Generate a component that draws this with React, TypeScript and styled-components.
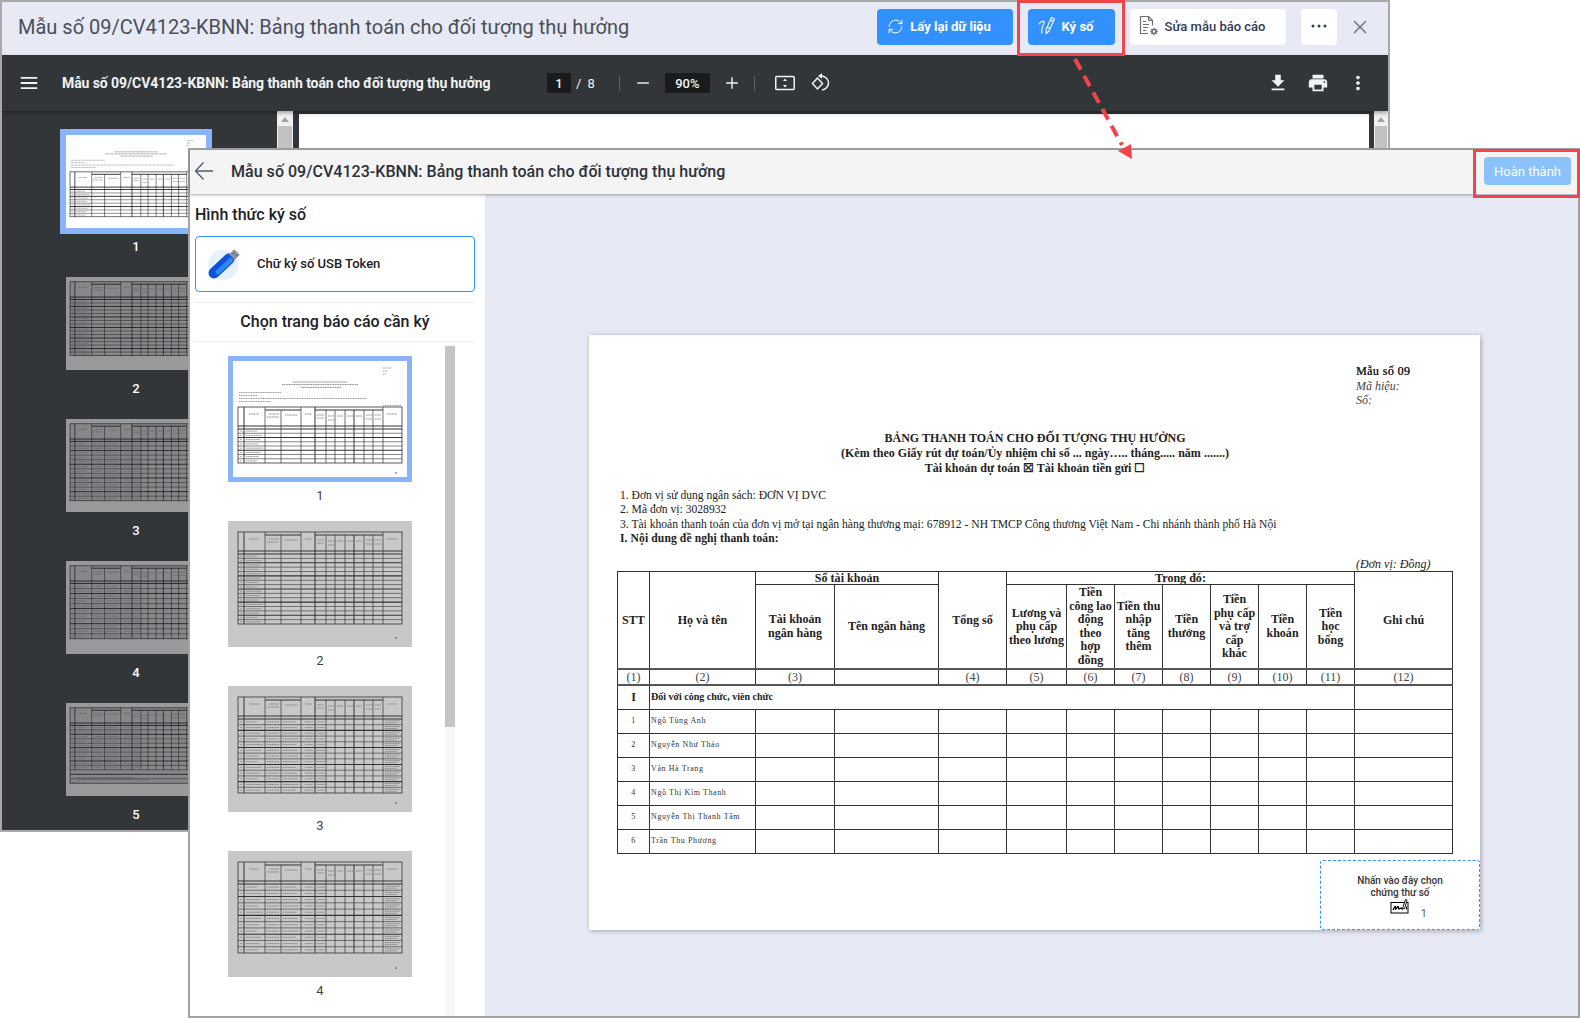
import React from 'react';
import styled, { createGlobalStyle } from 'styled-components';
import { RefreshCw, X } from 'lucide-react';

const GlobalStyle = createGlobalStyle`
  html, body { margin: 0; padding: 0; background: #fff; }
  body { font-family: Roboto, "Noto Sans", sans-serif; }
  * { box-sizing: border-box; }
`;

const Stage = styled.div`
  position: relative;
  width: 1580px;
  height: 1019px;
  overflow: hidden;
  background: #fff;
`;

/* back window */
const BackWindow = styled.section`
  position: absolute;
  left: 0;
  top: 0;
  width: 1390px;
  height: 832px;
  border: 2px solid #a9a9a9;
  display: flex;
  flex-direction: column;
  overflow: hidden;
  isolation: isolate;
`;

const BackHeader = styled.header`
  height: 53px;
  flex: none;
  display: flex;
  align-items: center;
  padding: 0 0 3px 16px;
  background: #e7e9f5;
`;

const BackTitle = styled.h1`
  flex: 1;
  margin: 0;
  font-size: 20px;
  font-weight: 400;
  color: #4a4f57;
  white-space: nowrap;
`;

const ActionButton = styled.button<{ $primary?: boolean; $w: number }>`
  width: ${p => p.$w}px;
  height: 36px;
  margin-right: 15px;
  border: 0;
  border-radius: 4px;
  padding: 0 ${p => (p.$w > 40 ? 12 : 0)}px 2px 0;
  display: flex;
  align-items: center;
  justify-content: center;
  gap: 6px;
  font-family: Roboto, sans-serif;
  font-size: 13px;
  font-weight: ${p => (p.$primary ? 700 : 500)};
  color: ${p => (p.$primary ? '#fff' : '#2f3a56')};
  background: ${p => (p.$primary ? '#3390ff' : '#fff')};
`;

const CloseIcon = styled.span`
  width: 22px;
  margin: 0 17px 0 -3px;
  display: flex;
  color: #6e7480;
`;

const PdfToolbar = styled.div`
  height: 56px;
  flex: none;
  display: flex;
  align-items: center;
  padding-left: 18px;
  background: #323639;
  color: #f1f3f4;
  box-shadow: 0 2px 4px rgba(0, 0, 0, 0.35);
  position: relative;
  z-index: 1;
`;

const ToolIcon = styled.span<{ $ml?: number }>`
  display: flex;
  margin-left: ${p => p.$ml ?? 0}px;
`;

const PdfTitle = styled.div`
  width: 485px;
  margin-left: 24px;
  font-size: 14px;
  font-weight: 700;
  letter-spacing: -0.08px;
  white-space: nowrap;
`;

const PageBox = styled.span<{ $w: number; $ml?: number }>`
  width: ${p => p.$w}px;
  height: 20px;
  margin-left: ${p => p.$ml ?? 0}px;
  display: flex;
  align-items: center;
  justify-content: center;
  background: #191b1c;
  font-size: 13px;
  font-weight: 500;
`;

const PageCount = styled.span`
  margin-left: 5px;
  font-size: 13px;
  word-spacing: 3px;
`;

const ToolSep = styled.span<{ $ml: number }>`
  width: 1px;
  height: 15px;
  margin-left: ${p => p.$ml}px;
  background: #5f6368;
`;

const PdfBody = styled.div`
  flex: 1;
  display: flex;
  min-height: 0;
  background: #323639;
`;

const ThumbRail = styled.div<{ $w: number; $pt: number; $pl: number }>`
  width: ${p => p.$w}px;
  flex: none;
  display: flex;
  flex-direction: column;
  padding: ${p => p.$pt}px 0 0 ${p => p.$pl}px;
  overflow: hidden;
`;

const ThumbItem = styled.div<{ $w: number; $h: number; $gap: number }>`
  width: ${p => p.$w}px;
  height: ${p => p.$h}px;
  flex: none;
  display: flex;
  flex-direction: column;
  align-items: center;
  gap: ${p => p.$gap}px;
`;

const ThumbSheet = styled.div<{ $w: number; $h: number; $paper: string; $ring?: number; $outer?: boolean }>`
  width: ${p => p.$w}px;
  height: ${p => p.$h}px;
  flex: none;
  background: ${p => p.$paper};
  ${p => (p.$ring && !p.$outer ? `border: ${p.$ring}px solid #8ab4f8;` : '')}
  ${p => (p.$ring && p.$outer ? `outline: ${p.$ring}px solid #8ab4f8;` : '')}
  svg { display: block; width: 100%; height: 100%; }
`;

const ThumbNumber = styled.span<{ $dark?: boolean }>`
  font-size: 13px;
  line-height: 15px;
  font-weight: ${p => (p.$dark ? 500 : 400)};
  color: ${p => (p.$dark ? '#fff' : '#444')};
`;

const Scrollbar = styled.div<{ $w: number }>`
  width: ${p => p.$w}px;
  flex: none;
  background: #f1f1f1;
  position: relative;
  padding-top: 15px;
  &::before {
    content: '';
    position: absolute;
    top: 6px;
    left: 50%;
    margin-left: -4px;
    border: 4px solid transparent;
    border-top: 0;
    border-bottom: 5px solid #a3a3a3;
  }
  &::after {
    content: '';
    display: block;
    height: 100%;
    margin: 0 1px;
    background: #c1c1c1;
  }
`;

const PdfPane = styled.div`
  flex: 1;
  margin: 3px 5px 0 6px;
  background: #fff;
`;

/* front window */
const FrontWindow = styled.section`
  position: absolute;
  left: 188px;
  top: 148px;
  width: 1392px;
  height: 870px;
  border: 2px solid #a3a3a3;
  display: flex;
  flex-direction: column;
  background: #e7e9f5;
  isolation: isolate;
`;

const FrontHeader = styled.header`
  height: 44px;
  flex: none;
  display: flex;
  align-items: center;
  padding: 0 7px 2px 4px;
  background: #f4f4f4;
  box-shadow: 0 1px 3px rgba(0, 0, 0, 0.35);
  position: relative;
  z-index: 1;
`;

const FrontTitle = styled.h2`
  flex: 1;
  margin: 0 0 0 17px;
  font-size: 16px;
  font-weight: 500;
  letter-spacing: 0.03px;
  color: #2c3038;
  white-space: nowrap;
`;

const DoneButton = styled.button`
  width: 87px;
  height: 28px;
  border: 0;
  border-radius: 4px;
  padding: 0;
  font-family: Roboto, sans-serif;
  font-size: 13px;
  color: #fff;
  background: #8ac3fb;
`;

const FrontBody = styled.div`
  flex: 1;
  display: flex;
  min-height: 0;
`;

const SignPanel = styled.aside`
  width: 295px;
  flex: none;
  display: flex;
  flex-direction: column;
  padding: 11px 0 0 5px;
  background: #fff;
  overflow: hidden;
`;

const PanelLabel = styled.div`
  font-size: 16px;
  line-height: 20px;
  font-weight: 500;
  color: #1d2026;
`;

const TokenCard = styled.div`
  width: 280px;
  height: 56px;
  flex: none;
  margin-top: 11px;
  display: flex;
  align-items: center;
  gap: 17px;
  padding: 0 0 1px 10px;
  border: 1px solid #2f95ff;
  border-radius: 4px;
  font-size: 13px;
  font-weight: 500;
  color: #1d2026;
`;

const PageHeading = styled.div`
  width: 280px;
  height: 40px;
  flex: none;
  margin-top: 10px;
  padding-bottom: 2px;
  display: flex;
  align-items: center;
  justify-content: center;
  border-top: 1px solid #eceef1;
  border-bottom: 1px solid #eceef1;
  font-size: 16px;
  font-weight: 500;
  color: #1d2026;
`;

const PageChooser = styled.div`
  flex: 1;
  display: flex;
  min-height: 0;
  margin-top: 4px;
`;

const ChooserScroll = styled.div`
  width: 10px;
  background: #f7f7f7;
  &::before {
    content: '';
    display: block;
    height: 381px;
    background: #c4c4c4;
  }
`;

const DocArea = styled.main`
  flex: 1;
  padding: 141px 99px 0 104px;
`;

const Sheet = styled.article`
  position: relative;
  height: 595px;
  padding: 29px 27px 0 28px;
  background: #fff;
  box-shadow: 1px 1px 5px rgba(0, 0, 0, 0.3);
  font-family: "Liberation Serif", "Times New Roman", serif;
  font-size: 12px;
  line-height: 14.5px;
  color: #222;
`;

const FormMeta = styled.div`
  margin-left: 739px;
  em { display: block; color: #444; }
  strong { font-weight: 400; letter-spacing: 0.4px; text-shadow: 0.3px 0 0 #222; }
`;

const FormTitle = styled.div`
  margin-top: 23px;
  text-align: center;
  font-weight: 700;
  letter-spacing: 0.02px;
  line-height: 15.2px;
`;

const FormLines = styled.div`
  margin: 12.5px 0 0 3px;
  font-size: 11.6px;
  b { letter-spacing: 0.1px; }
`;

const UnitNote = styled.div`
  margin: 11.5px 0 0 739px;
  font-style: italic;
  line-height: 12px;
  height: 13px;
`;

const DocTable = styled.table`
  width: 835px;
  table-layout: fixed;
  border-collapse: collapse;
  border: 1.5px solid #333;
  td, th {
    padding: 0;
    border: 1px solid #333;
    text-align: center;
    vertical-align: middle;
    overflow: hidden;
  }
  th { padding-top: 2px; font-weight: 700; letter-spacing: 0.03px; line-height: 13.6px; font-size: 12px; }
  th[colspan] { padding-top: 0; line-height: 12px; }
`;

const TitleRow = styled.tr`
  height: 13px;
`;

const LabelRow = styled.tr`
  height: 83px;
  th { padding-top: 1px; }
`;

const NumberRow = styled.tr`
  height: 16px;
  td { font-size: 12px; line-height: 12px; color: #444; border-top: 2px solid #555; border-bottom: 2px solid #555; }
`;

const GroupRow = styled.tr`
  height: 24.5px;
  td { font-weight: 700; font-size: 12px; }
  td + td { font-size: 10px; text-align: left; padding-left: 1px; }
`;

const PersonRow = styled.tr`
  height: 24px;
  td { font-size: 8px; letter-spacing: 0.6px; color: #333; }
  td:nth-child(2) { text-align: left; padding-left: 1px; }
`;

const SignSlot = styled.div`
  position: absolute;
  right: 0;
  bottom: 0;
  width: 160px;
  height: 70px;
  padding-top: 14px;
  border: 1px dashed #2f95ff;
  border-radius: 3px;
  display: flex;
  flex-direction: column;
  align-items: center;
  font-family: Roboto, sans-serif;
  font-size: 10px;
  line-height: 12px;
  font-weight: 500;
  color: #333;
`;

const SignMark = styled.div`
  position: relative;
  margin-top: -2px;
  display: flex;
  span {
    position: absolute;
    left: 31px;
    top: 11px;
    font-weight: 400;
    color: #555;
  }
`;

/* annotations */
const RedFrame = styled.div<{ $l: number; $t: number; $w: number; $h: number }>`
  position: absolute;
  left: ${p => p.$l}px;
  top: ${p => p.$t}px;
  width: ${p => p.$w}px;
  height: ${p => p.$h}px;
  border: 3px solid #f2444a;
  pointer-events: none;
`;

const ArrowSvg = styled.svg`
  position: absolute;
  left: 1060px;
  top: 50px;
`;

const COLS = [10, 16, 37, 53, 73, 87, 98, 107, 117, 126, 136, 145, 155, 174];

type SketchProps = {
  top: number;
  bottom: number;
  rows: number;
  ink: string;
  bar: string;
  tint?: string;
  filled?: boolean;
  first?: boolean;
  footer?: boolean;
  crop?: boolean;
};

function PageSketch({ top, bottom, rows, ink, bar, tint, filled, first, footer, crop }: SketchProps) {
  const head = top + 19;
  const num = head + 3;
  const rowH = (bottom - num) / rows;
  const ys = Array.from({ length: rows + 1 }, (_, i) => num + i * rowH);
  const footRows = footer ? 3 : 0;
  const gridEnd = bottom - footRows * rowH;
  return (
    <svg viewBox={crop ? '5 5 174 116' : '0 0 184 126'} preserveAspectRatio="none" aria-hidden="true">
      {first && (
        <g stroke={bar} strokeWidth=".7" strokeDasharray="1.2 .5">
          <path d="M155 12h8M155 15h5M155 18h3" />
          <path d="M65 26h54M54 28.600h76M73 31.400h40" strokeWidth=".9" />
          <path d="M11 36.500h42M11 39.500h18M11 42.500h128M11 45.500h32" />
          <path d="M155 49.500h18" />
        </g>
      )}
      <g stroke={ink} strokeWidth=".8" fill="none">
        <rect x="10" y={top} width="164" height={bottom - top} fill={tint ?? 'none'} />
        <path d={`M10 ${head}H174M10 ${num}H174`} strokeWidth="1.100" />
        {ys.slice(1, -1).map((y, i) => (
          <path key={i} d={`M10 ${y}H174`} strokeWidth={i % 3 === 1 ? 1.100 : 0.6} />
        ))}
        {COLS.slice(1, -1).map((x, i) => (
          <path
            key={x}
            d={`M${x} ${i === 2 || (i > 4 && i < 11) ? top + 3 : top}V${gridEnd}`}
            strokeWidth={i % 4 === 0 ? 1 : 0.7}
          />
        ))}
        <path d={`M37 ${top + 3}H73M87 ${top + 3}H155`} strokeWidth="1.100" />
      </g>
      <g stroke={bar} strokeWidth=".8" strokeDasharray="1.2 .4">
        <path d={`M21 ${top + 7}h10M41 ${top + 7}h10M57 ${top + 8}h13M77 ${top + 7}h7M89 ${top + 8}h7M100 ${top + 9}h6M109 ${top + 9}h6M119 ${top + 9}h6M128 ${top + 9}h6M138 ${top + 8}h6M147 ${top + 8}h6M159 ${top + 7}h10`} />
        <path d={`M39 ${top + 10}h12M89 ${top + 11}h7M100 ${top + 13}h6M138 ${top + 12}h6M147 ${top + 12}h6`} />
        {ys.slice(0, footer ? -4 : -1).map((y, i) => (
          <g key={i}>
            <path d={`M12 ${y + rowH / 2}h2M18 ${y + rowH / 2}h${11 + ((i * 5) % 7)}`} />
            {filled && (
              <path
                d={`M39 ${y + rowH / 2}h12M55 ${y + rowH / 2}h${13 + (i % 4)}M77 ${y + rowH / 2}h8M89 ${y + rowH / 2}h8M157 ${y + rowH / 2 - 1}h15M157 ${y + rowH / 2 + 1}h12`}
              />
            )}
          </g>
        ))}
        {footer && <path d={`M18 ${bottom - 7}h70M18 ${bottom - 4}h90M12 ${bottom - 1}h6`} />}
      </g>
      <path d="M167 117h2" stroke={ink} strokeWidth=".8" />
    </svg>
  );
}

const sketchPages = [
  { page: 1, top: 51, bottom: 107, rows: 8, first: true },
  { page: 2, top: 11, bottom: 103, rows: 16 },
  { page: 3, top: 11, bottom: 107, rows: 13, filled: true },
  { page: 4, top: 11, bottom: 102, rows: 11, filled: true },
  { page: 5, top: 11, bottom: 105, rows: 13, filled: true, footer: true },
];

const people = ['Ngô Tùng Anh', 'Nguyễn Như Thảo', 'Văn Hà Trang', 'Ngô Thị Kim Thanh', 'Nguyễn Thị Thanh Tâm', 'Trần Thu Phương'];
const colWidths = [32, 106, 79, 104, 68, 60, 48, 48, 48, 48, 48, 48, 98];

const MaterialIcon = ({ d, size = 22 }: { d: string; size?: number }) => (
  <svg width={size} height={size} viewBox="0 0 24 24" fill="currentColor"><path d={d} /></svg>
);

const SignPenIcon = () => (
  <svg width="18" height="20" viewBox="0 0 18 20" fill="none" stroke="#fff" strokeWidth="1.100" strokeLinecap="round" strokeLinejoin="round">
    <path d="M1 8c1.500-2 4-3.500 5-2.500 1 1-1.500 4-2 7-.3 1.500-.3 3-.2 4.500" />
    <path d="M13.500 1.500L16.500 3 11 15l-2.800 2.500-.2-3.700zM12.300 4l3 1.500M9 11l2.800 1.400" />
  </svg>
);

const DocGearIcon = () => (
  <svg width="20" height="22" viewBox="0 0 20 22" fill="none" stroke="#6b6f76" strokeWidth="1.200" strokeLinejoin="round">
    <path d="M9 18.500H1.500V1.500h8l4 4v5" />
    <path d="M9.500 1.500v4h4" />
    <path d="M4 6.500h3M4 9.500h6M4 12.500h5M4 15.500h3" />
    <circle cx="15" cy="16.500" r="2" strokeWidth="1.600" />
    <path d="M15 12.800v1.500M15 18.700v1.500M11.300 16.500h1.500M17.200 16.500h1.500M12.400 13.900l1 1M16.600 18.100l1 1M17.600 13.900l-1 1M13.400 18.100l-1 1" strokeWidth="1.300" />
  </svg>
);

const UsbIcon = () => (
  <svg width="34" height="32" viewBox="0 0 34 32" aria-hidden="true" fill="none">
    <circle cx="17" cy="17" r="15" fill="#e6f1fc" />
    <path d="M8 25L23 11" stroke="#0f52d6" strokeWidth="11" strokeLinecap="round" />
    <path d="M12 24L25 12" stroke="#2f88f0" strokeWidth="4.500" strokeLinecap="round" />
    <path d="M26 9L31 4" stroke="#8e959e" strokeWidth="8" />
    <path d="M27 5l1 1M30 7l1 1" stroke="#4e545c" strokeWidth="1.300" />
  </svg>
);

const SignGlyph = () => (
  <svg width="20" height="17" viewBox="0 0 20 17" fill="none" stroke="#000">
    <rect x="1" y="5.500" width="17" height="10.500" fill="#fff" strokeWidth="1" />
    <path d="M3 13c1-2 2-4 2.500-3.500S5 12.500 6 12s1-2.500 2-2.500 0 2.500 1 2.500 1.500-1 2-1 .5 1 2 1" strokeWidth="1.300" />
    <path d="M12.500 11.500L15.500 2.500l1.500.6-2.500 8.700z" fill="#fff" strokeWidth=".9" />
    <path d="M16.500 9.500v3" strokeWidth="1" />
  </svg>
);

export default function App() {
  return (
    <Stage>
      <GlobalStyle />
      <BackWindow>
        <BackHeader>
          <BackTitle>Mẫu số 09/CV4123-KBNN: Bảng thanh toán cho đối tượng thụ hưởng</BackTitle>
          <ActionButton $primary $w={136}><RefreshCw size={17} strokeWidth={1.4} />Lấy lại dữ liệu</ActionButton>
          <ActionButton $primary $w={87}><SignPenIcon />Ký số</ActionButton>
          <ActionButton $w={156}><DocGearIcon />Sửa mẫu báo cáo</ActionButton>
          <ActionButton $w={36}>
            <svg width="16" height="4" viewBox="0 0 16 4" fill="#2f3a56"><circle cx="2" cy="2" r="1.500" /><circle cx="8" cy="2" r="1.500" /><circle cx="14" cy="2" r="1.500" /></svg>
          </ActionButton>
          <CloseIcon><X size={22} strokeWidth={1.6} /></CloseIcon>
        </BackHeader>
        <PdfToolbar>
          <ToolIcon><MaterialIcon size={18} d="M1 4h22v2.400H1zM1 10.800h22v2.400H1zM1 17.600h22V20H1z" /></ToolIcon>
          <PdfTitle>Mẫu số 09/CV4123-KBNN: Bảng thanh toán cho đối tượng thụ hưởng</PdfTitle>
          <PageBox $w={24}>1</PageBox>
          <PageCount>/ 8</PageCount>
          <ToolSep $ml={24} />
          <ToolIcon $ml={16}><MaterialIcon size={14} d="M2 10.800h20v2.400H2z" /></ToolIcon>
          <PageBox $w={45} $ml={15}>90%</PageBox>
          <ToolIcon $ml={15}><MaterialIcon size={14} d="M2 10.800h8.800V2h2.400v8.800H22v2.400h-8.800V22h-2.400v-8.800H2z" /></ToolIcon>
          <ToolSep $ml={15} />
          <ToolIcon $ml={20}>
            <svg width="20" height="18" viewBox="0 0 20 18" fill="none" stroke="currentColor" strokeWidth="1.500"><rect x=".75" y="2.500" width="18.500" height="13" rx="1" /><path d="M10 4.500l2 2.500H8zM10 13.500l2-2.500H8z" fill="currentColor" stroke="none" /></svg>
          </ToolIcon>
          <ToolIcon $ml={16}>
            <svg width="20" height="20" viewBox="0 0 20 20" fill="none" stroke="currentColor" strokeWidth="1.500"><path d="M6.500 5L1.500 10.500l5 5.500 5-5.500z" /><path d="M10 3c4 .1 7.500 3 7.500 7 0 3.800-3 6.800-6.500 7" /><path d="M11 .2v5.600L7 3z" fill="currentColor" stroke="none" /></svg>
          </ToolIcon>
          <ToolIcon $ml={436}><MaterialIcon d="M19 9h-4V3H9v6H5l7 7 7-7zM5 18v2h14v-2H5z" /></ToolIcon>
          <ToolIcon $ml={18}><MaterialIcon d="M19 8H5c-1.660 0-3 1.340-3 3v6h4v4h12v-4h4v-6c0-1.660-1.340-3-3-3zm-3 11H8v-5h8v5zm3-7c-.55 0-1-.45-1-1s.45-1 1-1 1 .45 1 1-.45 1-1 1zm-1-9H6v4h12V3z" /></ToolIcon>
          <ToolIcon $ml={18}><MaterialIcon d="M12 8c1.100 0 2-.9 2-2s-.9-2-2-2-2 .9-2 2 .9 2 2 2zm0 2c-1.100 0-2 .9-2 2s.9 2 2 2 2-.9 2-2-.9-2-2-2zm0 6c-1.100 0-2 .9-2 2s.9 2 2 2 2-.9 2-2-.9-2-2-2z" /></ToolIcon>
        </PdfToolbar>
        <PdfBody>
          <ThumbRail $w={275} $pt={24} $pl={64}>
            {sketchPages.map(({ page, ...s }) => (
              <ThumbItem key={page} $w={140} $h={142} $gap={11}>
                <ThumbSheet $w={140} $h={93} $paper={page === 1 ? '#fff' : '#98999b'} $ring={page === 1 ? 6 : 0} $outer>
                  <PageSketch
                    {...s}
                    crop
                    ink={page === 1 ? '#222' : '#1e2022'}
                    bar={page === 1 ? '#777' : '#55585b'}
                    tint={page === 1 ? undefined : '#868789'}
                  />
                </ThumbSheet>
                <ThumbNumber $dark>{page}</ThumbNumber>
              </ThumbItem>
            ))}
          </ThumbRail>
          <Scrollbar $w={16} />
          <PdfPane />
          <Scrollbar $w={14} />
        </PdfBody>
      </BackWindow>

      <FrontWindow>
        <FrontHeader>
          <svg width="20" height="20" viewBox="0 0 20 20" fill="none" stroke="#4d5a70" strokeWidth="1.300"><path d="M19 10H1.500M9.500 1.500L1.500 10l8 8.500" /></svg>
          <FrontTitle>Mẫu số 09/CV4123-KBNN: Bảng thanh toán cho đối tượng thụ hưởng</FrontTitle>
          <DoneButton>Hoàn thành</DoneButton>
        </FrontHeader>
        <FrontBody>
          <SignPanel>
            <PanelLabel>Hình thức ký số</PanelLabel>
            <TokenCard><UsbIcon />Chữ ký số USB Token</TokenCard>
            <PageHeading>Chọn trang báo cáo cần ký</PageHeading>
            <PageChooser>
              <ThumbRail $w={250} $pt={10} $pl={33}>
                {sketchPages.map(({ page, ...s }) => (
                  <ThumbItem key={page} $w={184} $h={165} $gap={6}>
                    <ThumbSheet $w={184} $h={126} $paper={page === 1 ? '#fff' : '#c8c8c8'} $ring={page === 1 ? 5 : 0}>
                      <PageSketch {...s} crop={page === 1} ink="#333" bar="#777" />
                    </ThumbSheet>
                    {page < 5 && <ThumbNumber>{page}</ThumbNumber>}
                  </ThumbItem>
                ))}
              </ThumbRail>
              <ChooserScroll />
            </PageChooser>
          </SignPanel>
          <DocArea>
            <Sheet>
              <FormMeta>
                <strong>Mẫu số 09</strong>
                <em>Mã hiệu:</em>
                <em>Số:</em>
              </FormMeta>
              <FormTitle>
                <div>BẢNG THANH TOÁN CHO ĐỐI TƯỢNG THỤ HƯỞNG</div>
                <div>(Kèm theo Giấy rút dự toán/Ủy nhiệm chi số ... ngày….. tháng..... năm .......)</div>
                <div>Tài khoản dự toán ☒ Tài khoản tiền gửi ☐</div>
              </FormTitle>
              <FormLines>
                <div>1. Đơn vị sử dụng ngân sách: ĐƠN VỊ DVC</div>
                <div>2. Mã đơn vị: 3028932</div>
                <div>3. Tài khoản thanh toán của đơn vị mở tại ngân hàng thương mại: 678912 - NH TMCP Công thương Việt Nam - Chi nhánh thành phố Hà Nội</div>
                <b>I. Nội dung đề nghị thanh toán:</b>
              </FormLines>
              <UnitNote>(Đơn vị: Đồng)</UnitNote>
              <DocTable>
                <colgroup>
                  {colWidths.map((w, i) => <col key={i} width={w} />)}
                </colgroup>
                <thead>
                  <TitleRow>
                    <th rowSpan={2}>STT</th>
                    <th rowSpan={2}>Họ và tên</th>
                    <th colSpan={2}>Số tài khoản</th>
                    <th rowSpan={2}>Tổng số</th>
                    <th colSpan={7}>Trong đó:</th>
                    <th rowSpan={2}>Ghi chú</th>
                  </TitleRow>
                  <LabelRow>
                    <th>Tài khoản<br />ngân hàng</th>
                    <th>Tên ngân hàng</th>
                    <th>Lương và<br />phụ cấp<br />theo lương</th>
                    <th>Tiền<br />công lao<br />động<br />theo<br />hợp<br />đồng</th>
                    <th>Tiền thu<br />nhập<br />tăng<br />thêm</th>
                    <th>Tiền<br />thưởng</th>
                    <th>Tiền<br />phụ cấp<br />và trợ<br />cấp<br />khác</th>
                    <th>Tiền<br />khoán</th>
                    <th>Tiền<br />học<br />bổng</th>
                  </LabelRow>
                </thead>
                <tbody>
                  <NumberRow>
                    {['(1)', '(2)', '(3)', '', '(4)', '(5)', '(6)', '(7)', '(8)', '(9)', '(10)', '(11)', '(12)'].map((t, i) => <td key={i}>{t}</td>)}
                  </NumberRow>
                  <GroupRow>
                    <td>I</td>
                    <td colSpan={11}>Đối với công chức, viên chức</td>
                    <td />
                  </GroupRow>
                  {people.map((name, i) => (
                    <PersonRow key={name}>
                      <td>{i + 1}</td>
                      <td>{name}</td>
                      {colWidths.slice(2).map((_, c) => <td key={c} />)}
                    </PersonRow>
                  ))}
                </tbody>
              </DocTable>
              <SignSlot>
                <div>Nhấn vào đây chọn</div>
                <div>chứng thư số</div>
                <SignMark><SignGlyph /><span>1</span></SignMark>
              </SignSlot>
            </Sheet>
          </DocArea>
        </FrontBody>
      </FrontWindow>

      <RedFrame $l={1017} $t={0} $w={108} $h={56} />
      <RedFrame $l={1473} $t={149} $w={107} $h={49} />
      <ArrowSvg width="80" height="112" viewBox="0 0 80 112">
        <path d="M15 9L62 95" stroke="#f2444a" strokeWidth="4" strokeDasharray="12 7" fill="none" />
        <path d="M58 101L71 94L72 109z" fill="#f2444a" />
      </ArrowSvg>
    </Stage>
  );
}
